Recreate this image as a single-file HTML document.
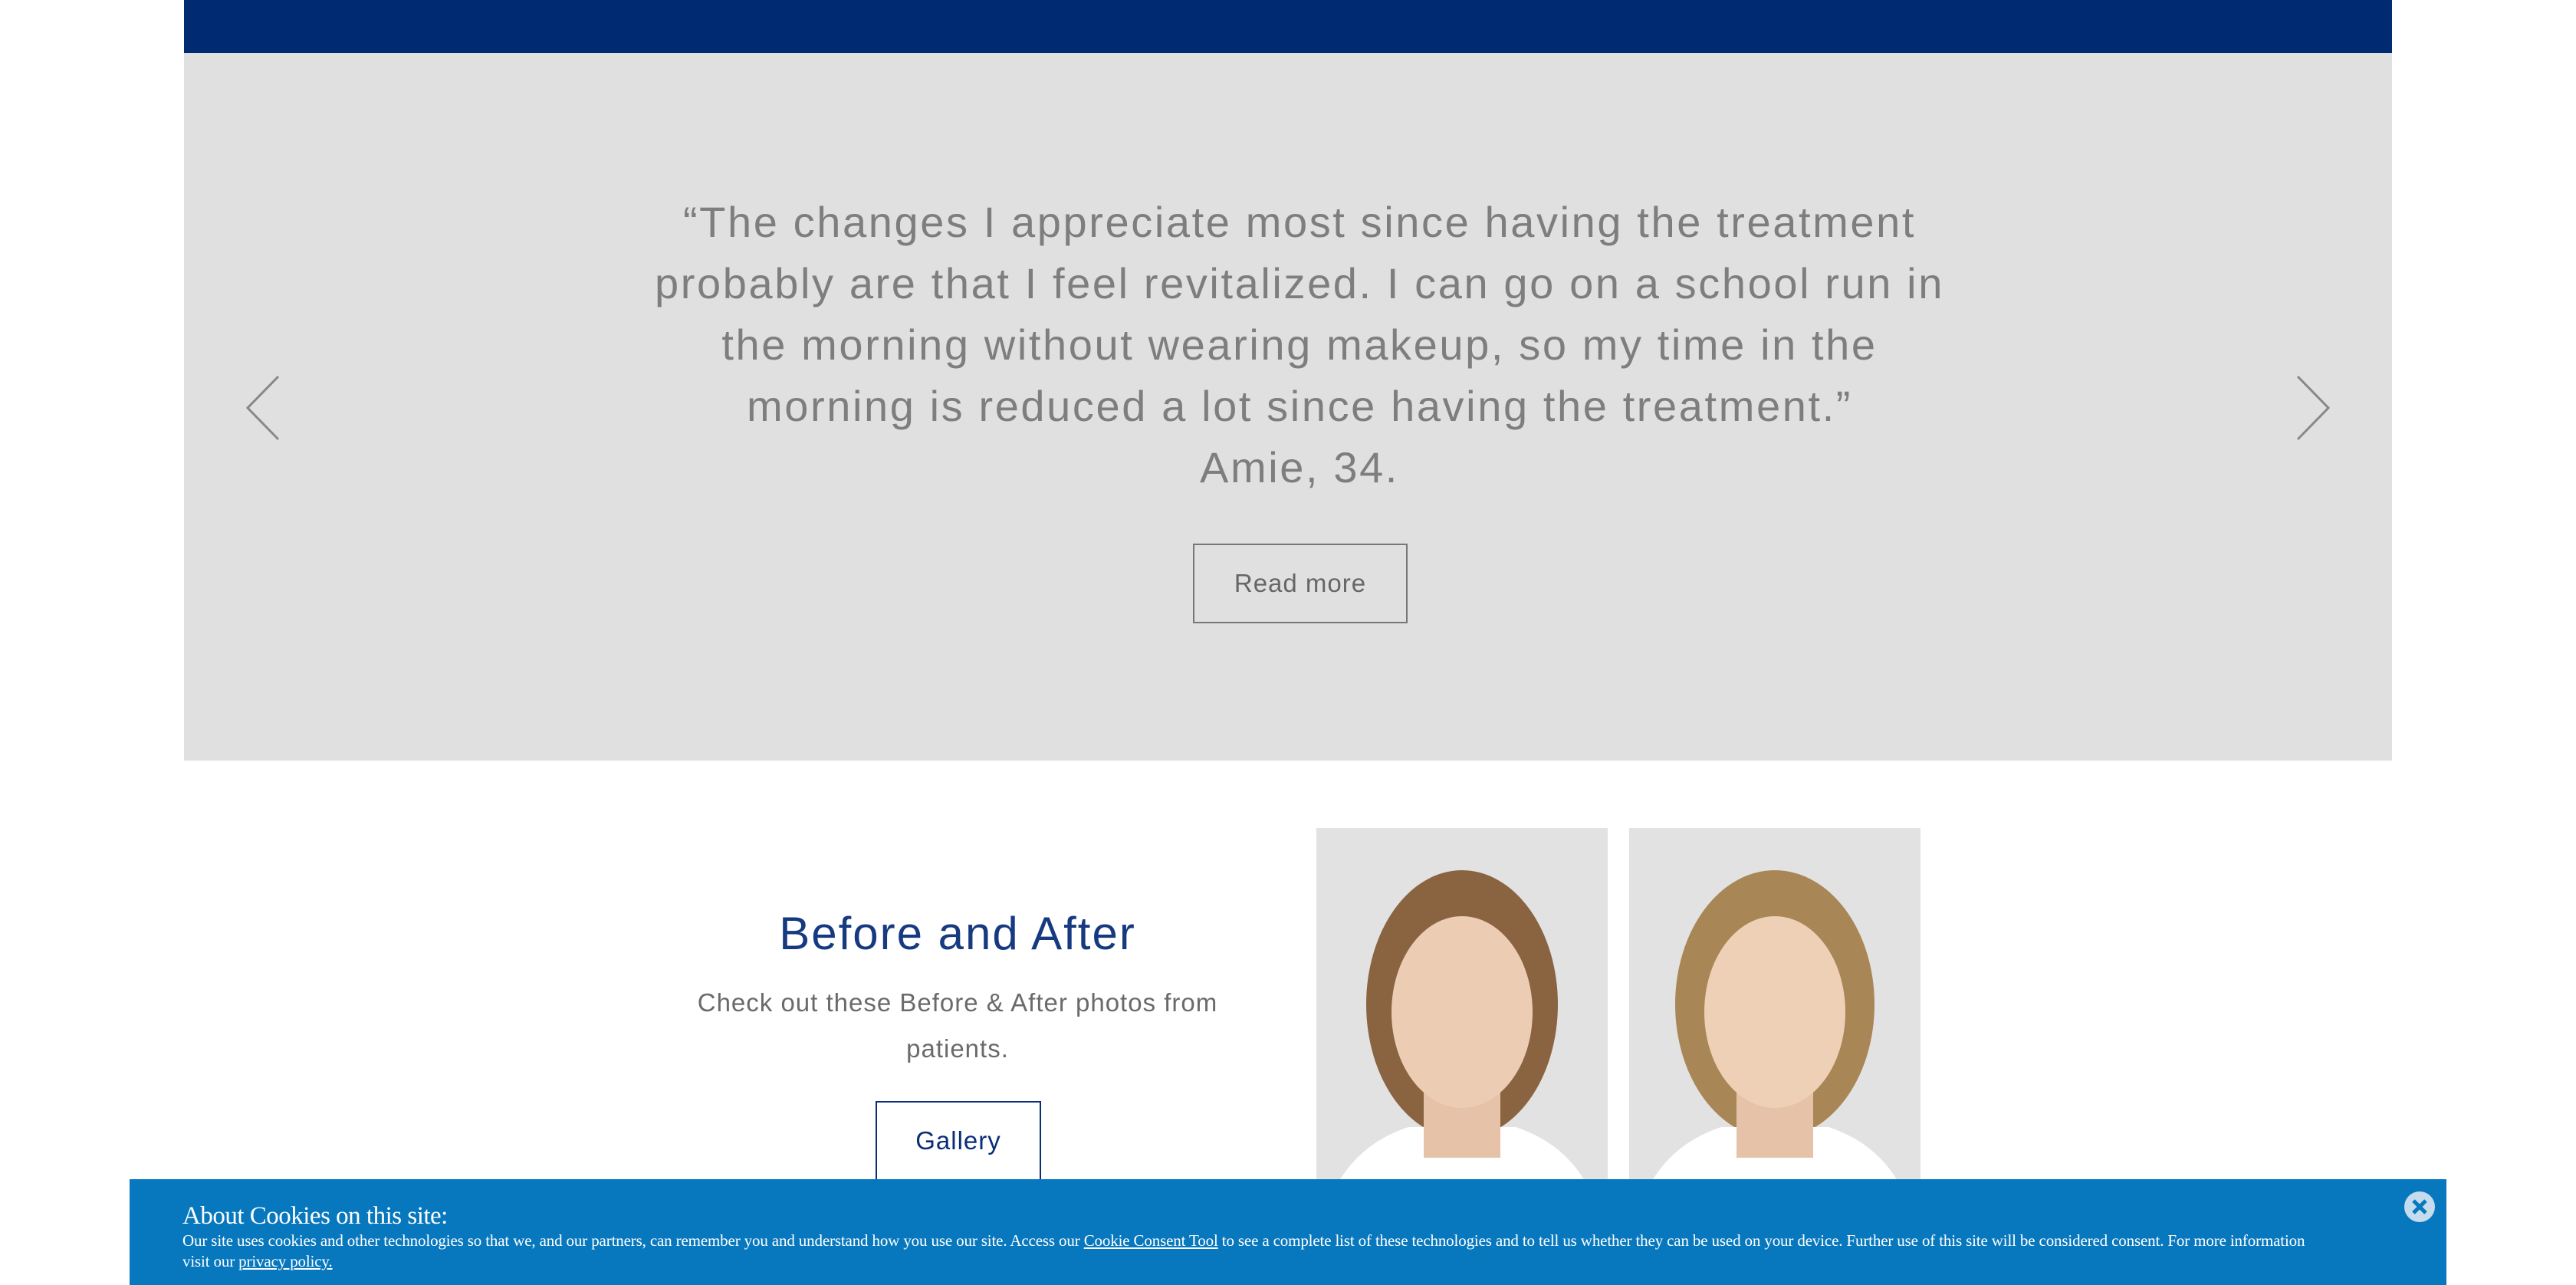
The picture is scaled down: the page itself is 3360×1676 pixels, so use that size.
<!DOCTYPE html>
<html><head><meta charset="utf-8"><style>
*{margin:0;padding:0;box-sizing:border-box}
body{width:3360px;height:1676px;background:#fff;position:relative;overflow:hidden;font-family:"Liberation Sans",sans-serif}
.nav{position:absolute;left:240px;top:0;width:2880px;height:69px;background:#002b73}
.gray{position:absolute;left:240px;top:69px;width:2880px;height:923px;background:#e0e0e0}
.quote{position:absolute;left:0;width:3360px;top:250px;text-align:center;color:#7e7e7e;font-size:56px;line-height:80px;letter-spacing:2.6px;padding-left:30px}
.btn{position:absolute;border:2px solid #777;color:#666;font-size:33px;display:flex;align-items:center;justify-content:center;letter-spacing:1px}
.arrow{position:absolute;top:489px}
h2{position:absolute;left:849px;width:800px;top:1183px;text-align:center;font-weight:normal;color:#163a80;font-size:60px;letter-spacing:2px}
.desc{position:absolute;left:849px;width:800px;top:1278px;text-align:center;color:#6a6a6a;font-size:33px;line-height:60px;letter-spacing:1px}
.photo{position:absolute;top:1080px;width:380px;height:460px;background:#e2e2e2;overflow:hidden}
.cookie{position:absolute;left:169px;top:1538px;width:3022px;height:138px;background:#0878be;color:#fff;font-family:"Liberation Serif",serif}
.cookie .t{position:absolute;left:69px;top:30px;font-size:33px;letter-spacing:-0.5px}
.cookie .b{position:absolute;left:69px;top:67px;width:2880px;font-size:21px;line-height:27px;letter-spacing:-0.15px}
.cookie u{text-decoration:underline}
.x{position:absolute;left:2967px;top:16px;width:40px;height:40px;border-radius:50%;background:#c5dcef}
</style></head><body>
<div class="nav"></div>
<div class="gray"></div>
<div class="quote">“The changes I appreciate most since having the treatment<br>probably are that I feel revitalized. I can go on a school run in<br>the morning without wearing makeup, so my time in the<br>morning is reduced a lot since having the treatment.”<br>Amie, 34.</div>
<div class="btn" style="left:1556px;top:709px;width:280px;height:104px">Read more</div>
<svg class="arrow" style="left:318px" width="50" height="86"><polyline points="45,2 5,43 45,84" fill="none" stroke="#888" stroke-width="3"/></svg>
<svg class="arrow" style="left:2992px" width="50" height="86"><polyline points="5,2 45,43 5,84" fill="none" stroke="#888" stroke-width="3"/></svg>
<h2>Before and After</h2>
<div class="desc">Check out these Before &amp; After photos from<br>patients.</div>
<div class="btn" style="left:1142px;top:1436px;width:216px;height:104px;border-color:#0a2d78;color:#0a2d78">Gallery</div>
<div class="photo" style="left:1717px">
<svg width="380" height="460"><ellipse cx="190" cy="230" rx="125" ry="175" fill="#8a6440"/><path d="M30 460 Q60 410 120 390 L260 390 Q320 410 350 460Z" fill="#fff"/><rect x="140" y="300" width="100" height="130" fill="#e6c3a8"/><ellipse cx="190" cy="240" rx="92" ry="125" fill="#ecccb2"/></svg></div>
<div class="photo" style="left:2125px">
<svg width="380" height="460"><ellipse cx="190" cy="230" rx="130" ry="175" fill="#a98656"/><path d="M30 460 Q60 410 120 390 L260 390 Q320 410 350 460Z" fill="#fff"/><rect x="140" y="300" width="100" height="130" fill="#e6c3a8"/><ellipse cx="190" cy="240" rx="92" ry="125" fill="#eed0b6"/></svg></div>
<div class="cookie">
<div class="t">About Cookies on this site:</div>
<div class="b">Our site uses cookies and other technologies so that we, and our partners, can remember you and understand how you use our site. Access our <u>Cookie Consent Tool</u> to see a complete list of these technologies and to tell us whether they can be used on your device. Further use of this site will be considered consent. For more information<br>visit our <u>privacy policy.</u></div>
<div class="x"><svg width="40" height="40"><path d="M12 12L28 28M28 12L12 28" stroke="#0878be" stroke-width="5"/></svg></div>
</div>
</body></html>
